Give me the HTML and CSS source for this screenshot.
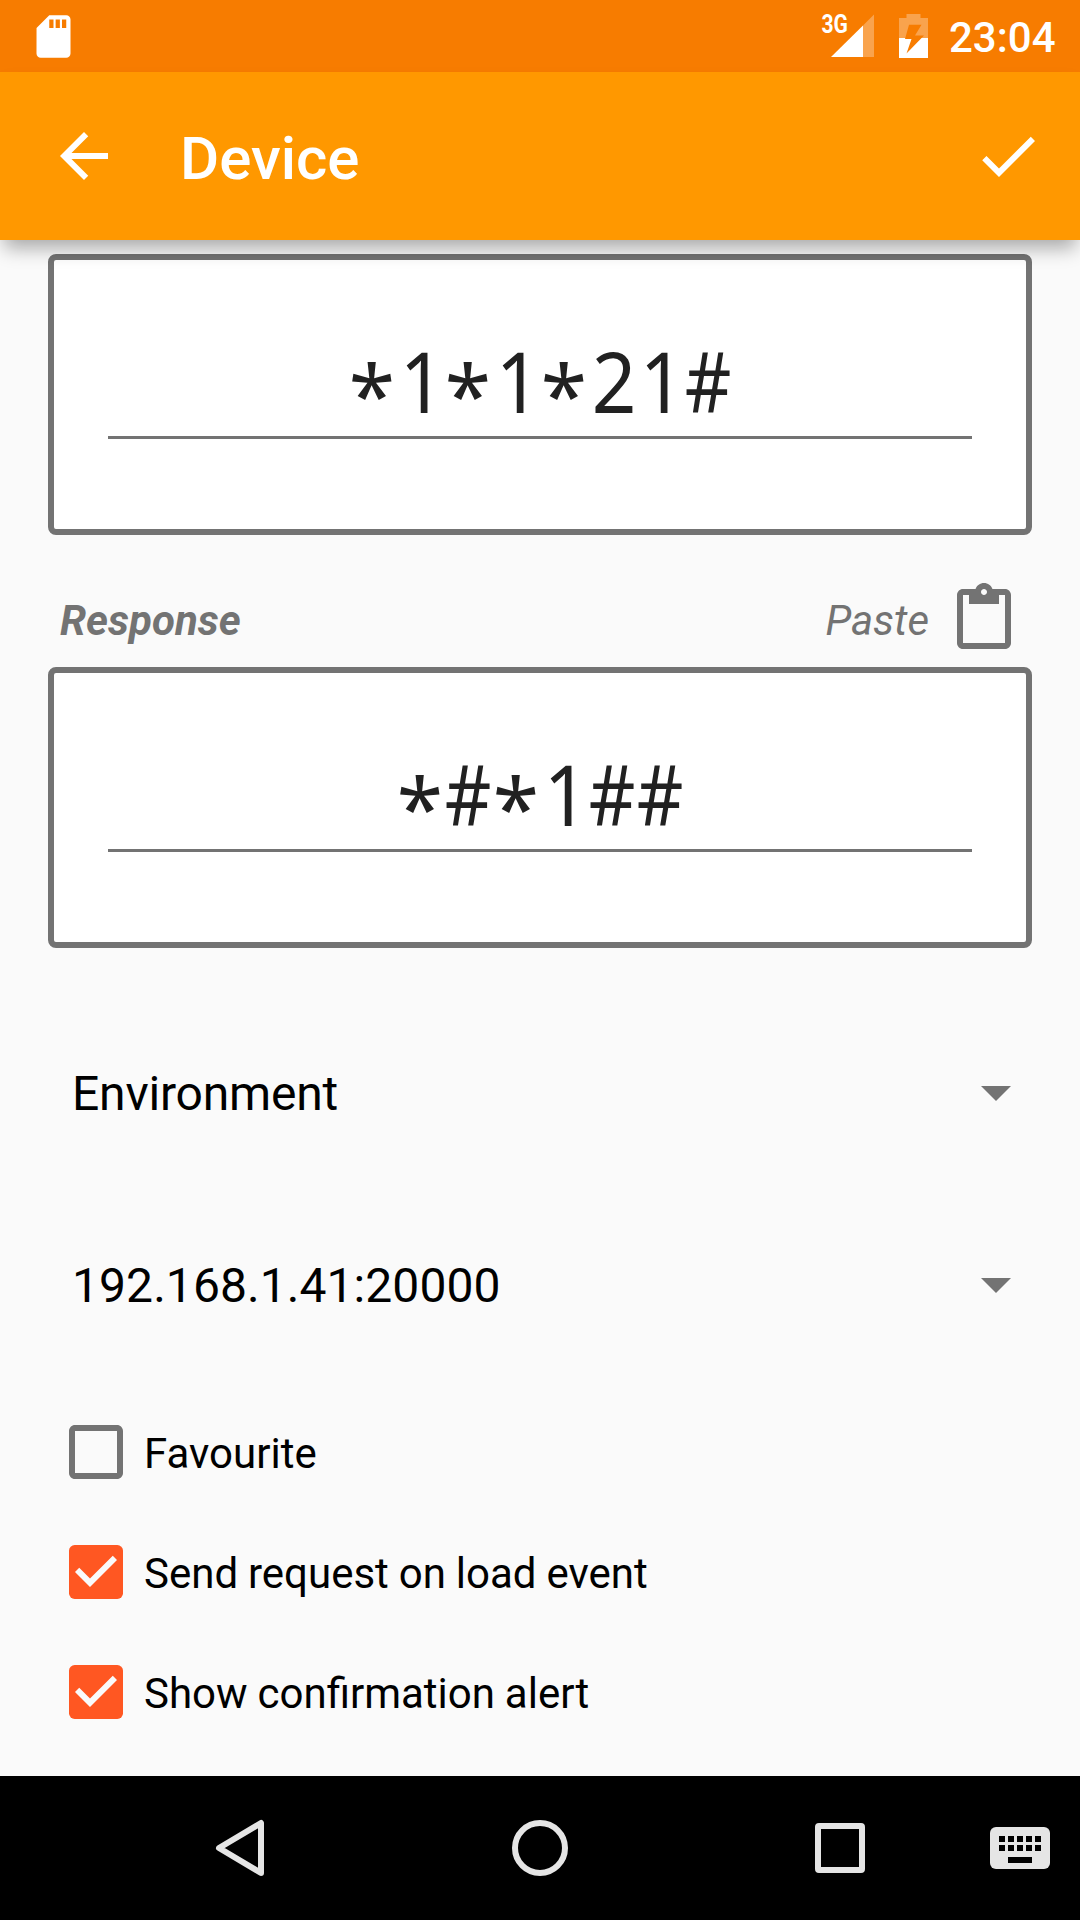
FILE: index.html
```html
<!DOCTYPE html>
<html lang="en">
<head>
<meta charset="utf-8">
<title>Device</title>
<link rel="stylesheet" href="styles.css">
</head>
<body>
<div class="screen">
  <div class="statusbar">
    <svg class="sd" viewBox="0 0 24 24"><path fill="#fff" d="M18 2h-8L4.02 8 4 20c0 1.1.9 2 2 2h12c1.1 0 2-.9 2-2V4c0-1.1-.9-2-2-2zm-6 6h-2V4h2v4zm3 0h-2V4h2v4zm3 0h-2V4h2v4z"/></svg>
    <svg class="signal" viewBox="0 0 54 72" fill="#fff">
      <path fill-opacity=".3" d="M43 25.500V57h11V14.500z"/>
      <path d="M11 57H43V25.500z"/>
      <text class="network" x="1.500" y="33.300" textLength="26.500" lengthAdjust="spacingAndGlyphs">3G</text>
    </svg>
    <svg class="battery" viewBox="0 0 29 72">
      <path fill="#fff" fill-opacity=".3" d="M7.500 14h14v4H29v20H0V18h7.500z"/>
      <path fill="#fff" d="M0 38h29v20H0z"/>
      <path fill="#f77c00" d="M10 24.700h12.500L16 35.500h9L7.500 53.500 12.500 39H6z"/>
    </svg>
    <span class="clock">23:04</span>
  </div>
  <header class="toolbar">
    <svg class="icon" viewBox="0 0 24 24"><path fill="#fff" d="M20 11H7.830l5.590-5.590L12 4l-8 8 8 8 1.410-1.410L7.830 13H20v-2z"/></svg>
    <h1 class="title">Device</h1>
    <svg class="icon" viewBox="0 0 24 24"><path fill="#fff" d="M9 16.170L4.830 12l-1.420 1.410L9 19 21 7l-1.410-1.410z"/></svg>
  </header>
  <main class="content">
    <section class="box"><div class="field"><span class="star">*</span><span class="digit">1</span><span class="star">*</span><span class="digit">1</span><span class="star">*</span><span class="digit">2</span><span class="digit">1</span><span class="hash">#</span></div></section>
    <div class="caption">
      <span class="name">Response</span>
      <span class="paste">Paste</span>
      <svg class="clip" viewBox="0 0 24 24"><path fill="#737373" d="M19 2h-4.180C14.400.840 13.300 0 12 0c-1.300 0-2.400.840-2.820 2H5c-1.100 0-2 .9-2 2v16c0 1.100.9 2 2 2h14c1.100 0 2-.9 2-2V4c0-1.100-.9-2-2-2zm-7 0c.550 0 1 .450 1 1s-.450 1-1 1-1-.450-1-1 .450-1 1-1zm7 18H5V4h2v3h10V4h2v16z"/></svg>
    </div>
    <section class="box"><div class="field"><span class="star">*</span><span class="hash">#</span><span class="star">*</span><span class="digit">1</span><span class="hash">#</span><span class="hash">#</span></div></section>
    <div class="spinners">
      <div class="spinner"><span class="environment">Environment</span><svg class="caret" viewBox="0 0 30 15"><path fill="#737373" d="M0 0h30L15 15z"/></svg></div>
      <div class="spinner"><span class="gateway">192.168.1.41:20000</span><svg class="caret" viewBox="0 0 30 15"><path fill="#737373" d="M0 0h30L15 15z"/></svg></div>
    </div>
    <div class="checks">
      <div class="check"><svg class="icon" viewBox="0 0 24 24"><path fill="#737373" d="M19 5v14H5V5h14m0-2H5c-1.100 0-2 .9-2 2v14c0 1.100.9 2 2 2h14c1.100 0 2-.9 2-2V5c0-1.100-.9-2-2-2z"/></svg><span>Favourite</span></div>
      <div class="check"><svg class="icon" viewBox="0 0 24 24"><rect x="3" y="3" width="18" height="18" rx="1.900" fill="#ff5722"/><path fill="#fafafa" d="M10 17l-5-5 1.410-1.410L10 14.170l7.590-7.590L19 8z"/></svg><span>Send request on load event</span></div>
      <div class="check"><svg class="icon" viewBox="0 0 24 24"><rect x="3" y="3" width="18" height="18" rx="1.900" fill="#ff5722"/><path fill="#fafafa" d="M10 17l-5-5 1.410-1.410L10 14.170l7.590-7.590L19 8z"/></svg><span>Show confirmation alert</span></div>
    </div>
  </main>
  <nav class="navbar">
    <svg class="key" viewBox="0 0 60 60"><path fill="none" stroke="#e5e5e5" stroke-width="6" stroke-linejoin="round" d="M9 30L51 5v50z"/></svg>
    <svg class="key" viewBox="0 0 60 60"><circle cx="30" cy="30" r="25" fill="none" stroke="#e5e5e5" stroke-width="6"/></svg>
    <svg class="key" viewBox="0 0 60 60"><path fill="#e5e5e5" fill-rule="evenodd" d="M9 5h42q4 0 4 4v42q0 4-4 4H9q-4 0-4-4V9q0-4 4-4zM11 11v38h38V11z"/></svg>
    <svg class="key" viewBox="0 0 60 60"><rect y="9" width="60" height="42" rx="6" fill="#e5e5e5"/><path d="M9 18h6v6H9zM18 18h6v6h-6zM27 18h6v6h-6zM36 18h6v6h-6zM45 18h6v6h-6zM9 27h6v6H9zM18 27h6v6h-6zM27 27h6v6h-6zM36 27h6v6h-6zM45 27h6v6h-6zM18 39h24v6H18z"/></svg>
  </nav>
</div>
</body>
</html>
```
FILE: styles.css
```css
* { box-sizing: border-box; }
body { margin: 0; font-family: Roboto, sans-serif; }
svg { display: block; flex: none; }
.screen { width: 1080px; height: 1920px; display: flex; flex-direction: column; background: #fafafa; overflow: hidden; }
.statusbar { height: 72px; flex: none; display: flex; align-items: center; background: #f77c00; padding: 0 24px 0 28px; }
.sd { width: 51px; height: 51px; margin-right: auto; }
.signal { width: 54px; height: 72px; }
.network { font: 700 25px Roboto, sans-serif; }
.battery { width: 29px; height: 72px; margin: 0 21px 0 25px; }
.clock { width: 107px; padding-top: 3px; font-size: 42px; font-weight: 500; line-height: 50px; color: #fff; }
.toolbar { height: 168px; flex: none; display: flex; align-items: center; padding: 0 36px 0 48px; background: #ff9800; box-shadow: 0 12px 18px -4px rgba(0, 0, 0, .33); position: relative; z-index: 1; }
.icon { width: 72px; height: 72px; }
.title { flex: 1; margin: 0; padding: 5px 0 0 60px; font-size: 60px; font-weight: 500; line-height: 72px; color: #fff; }
.content { flex: 1; display: flex; flex-direction: column; padding: 14px 48px 0; }
.box { height: 281px; flex: none; padding: 77px 54px 0; border: 6px solid #737373; border-radius: 8px; background: #fff; }
.field { height: 102px; border-bottom: 3px solid #737373; font: 84px/87px "Noto Sans", sans-serif; color: #212121; text-align: center; white-space: nowrap; }
.star, .hash, .digit { display: inline-block; width: 48px; }
.star { transform: translateY(13px); }
.digit { transform: translateX(2px) scaleX(.93); }
.hash { transform: translateX(-3px) scaleX(.86); transform-origin: 27px 50%; }
.caption { height: 132px; flex: none; display: flex; align-items: center; padding: 0 12px; font-size: 42px; font-style: italic; line-height: 50px; color: #737373; }
.name { flex: 1; font-weight: 700; padding-top: 40px; }
.paste { padding-top: 40px; margin-right: 19px; }
.clip { width: 72px; height: 72px; margin-top: 36px; }
.spinners { padding-top: 49px; flex: none; }
.spinner { height: 192px; display: flex; align-items: center; justify-content: space-between; padding: 0 21px 0 24px; font-size: 48px; color: #000; }
.environment { letter-spacing: -.2px; }
.gateway { letter-spacing: .07px; }
.caret { width: 30px; height: 15px; }
.checks { padding: 11px 0 0 12px; }
.check { height: 120px; display: flex; align-items: center; font-size: 42px; line-height: 50px; color: #000; }
.check span { padding: 3px 0 0 12px; word-spacing: -.5px; }
.navbar { height: 144px; flex: none; background: #000; display: grid; grid-template-columns: 300px 300px 300px 60px; align-items: center; justify-content: start; padding-left: 90px; }
.key { width: 60px; height: 60px; justify-self: center; }
```
